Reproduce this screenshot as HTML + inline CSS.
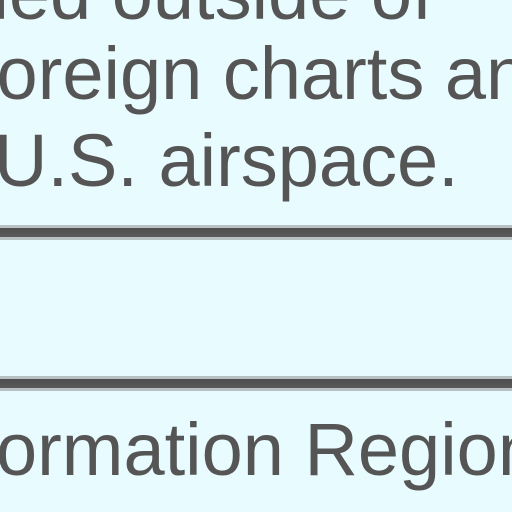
<!DOCTYPE html>
<html><head><style>
html,body{margin:0;padding:0}
body{width:512px;height:512px;overflow:hidden;background:#e8fbfe;position:relative;font-family:"Liberation Sans",Arial,sans-serif;color:#555;}
.t{position:absolute;font-size:74px;line-height:84px;white-space:nowrap;}
.r{position:absolute;left:0;width:512px;height:15px;background:linear-gradient(#b9c0c3 0,#b9c0c3 3px,#4e4e4e 3px,#5a5a5a 12px,#b9c0c3 12px)}
</style></head><body>
<div class="t" style="left:-24px;top:-48px">lied outside of</div>
<div class="t" style="left:-24px;top:32px">foreign charts and</div>
<div class="t" style="left:-6px;top:119px">U.S. airspace.</div>
<div class="r" style="top:225px"></div>
<div class="r" style="top:376px"></div>
<div class="t" style="left:-4px;top:408px">ormation Region</div>
</body></html>
